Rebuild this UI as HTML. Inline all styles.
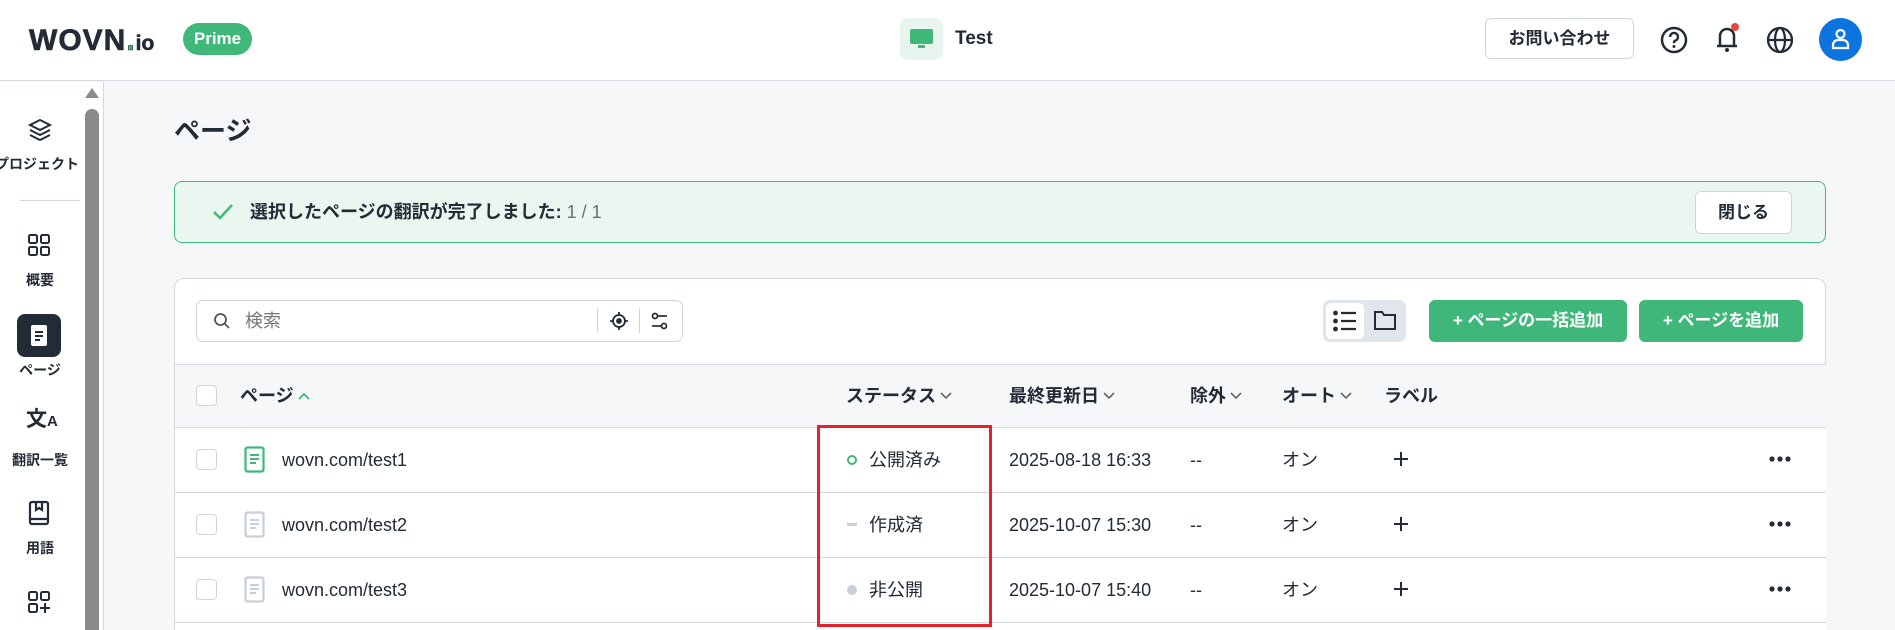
<!DOCTYPE html><html style="width:1895px;height:630px;overflow:hidden"><head><meta charset="utf-8"><style>
*{box-sizing:border-box;margin:0;padding:0}
body{width:1895px;height:630px;overflow:hidden;background:#f6f7f9;font-family:"Liberation Sans","Noto Sans CJK JP",sans-serif;color:#222b36;position:relative}
.a{position:absolute;line-height:22px}
.hdr{left:0;top:0;width:1895px;height:81px;background:#fff;border-bottom:1px solid #d5d9df}
.side{left:0;top:82px;width:104px;height:548px;background:#fff;border-right:1px solid #d5d9df}
.lbl{font-size:14px;font-weight:bold;text-align:center;width:80px;left:0}
.btnw{background:#fff;border:1px solid #cfd5dd;border-radius:6px;font-weight:bold;display:flex;align-items:center;justify-content:center}
.row{left:175px;width:1651px;border-top:1px solid #d5d9df;background:#fff}
.cb{width:21px;height:21px;border:1.5px solid #cfd5dd;border-radius:4px;background:#fff}
.t{font-size:18px}
.th{font-size:18px;font-weight:bold;display:flex;align-items:center}
.th svg{margin-left:3px}
</style></head><body>
<div class="a hdr"></div>
<div class="a" style="left:29px;top:25px;font-size:30px;line-height:32px;font-weight:900;letter-spacing:1px;color:#222b36;-webkit-text-stroke:0.6px #222b36">WOVN<span style="color:#3fb87a">.</span><span style="font-size:21px;letter-spacing:0">io</span></div>
<div class="a" style="left:183px;top:23px;width:69px;height:32px;border-radius:16px;background:#3fb87a;color:#fff;font-weight:bold;font-size:17px;text-align:center;line-height:32px">Prime</div>
<div class="a" style="left:900px;top:18px;width:43px;height:42px;border-radius:8px;background:#e8f5ee"></div>
<svg class="a" style="left:909px;top:27px" width="25" height="24" viewBox="0 0 25 24"><rect x="1" y="2" width="23" height="15" rx="2" fill="#3fb87a"/><rect x="9" y="18" width="7" height="3" fill="#3fb87a"/></svg>
<div class="a" style="left:955px;top:28px;font-size:19px;font-weight:bold">Test</div>
<div class="a btnw" style="left:1485px;top:18px;width:149px;height:41px;font-size:17px">お問い合わせ</div>
<svg class="a" style="left:1659px;top:25px" width="30" height="30" viewBox="0 0 30 30"><circle cx="15" cy="15" r="12" fill="none" stroke="#222b36" stroke-width="2.5"/><path d="M11 12a4 4 0 1 1 5 3.8c-1 .4-1 1-1 2.5" fill="none" stroke="#222b36" stroke-width="2.4"/><circle cx="15" cy="21.5" r="1.5" fill="#222b36"/></svg>
<svg class="a" style="left:1712px;top:22px" width="32" height="32" viewBox="0 0 32 32"><path d="M8 24V14a7 7 0 0 1 14 0v10M5 24h20" fill="none" stroke="#222b36" stroke-width="2.5"/><circle cx="15" cy="28" r="2" fill="#222b36"/><circle cx="23" cy="5" r="4" fill="#e5473d"/></svg>
<svg class="a" style="left:1765px;top:25px" width="30" height="30" viewBox="0 0 30 30"><g fill="none" stroke="#222b36" stroke-width="2.3"><circle cx="15" cy="15" r="12"/><ellipse cx="15" cy="15" rx="5" ry="12"/><path d="M3 15h24"/></g></svg>
<div class="a" style="left:1819px;top:18px;width:43px;height:43px;border-radius:50%;background:#0b74de"></div>
<svg class="a" style="left:1829px;top:27px" width="23" height="25" viewBox="0 0 23 25"><g fill="none" stroke="#fff" stroke-width="2.2"><circle cx="11.5" cy="7" r="4"/><path d="M4 21v-3a5 5 0 0 1 5-5h5a5 5 0 0 1 5 5v3z"/></g></svg>

<div class="a side"></div>
<div class="a" style="left:85px;top:88px;width:0;height:0;border-left:7px solid transparent;border-right:7px solid transparent;border-bottom:10px solid #8a8a8a"></div>
<div class="a" style="left:85px;top:109px;width:14px;height:521px;border-radius:7px 7px 0 0;background:#8a8a8a"></div>
<svg class="a" style="left:27px;top:117px" width="26" height="26" viewBox="0 0 26 26"><g fill="none" stroke="#222b36" stroke-width="2"><path d="M13 3l10 5-10 5-10-5z"/><path d="M3 13l10 5 10-5M3 18l10 5 10-5"/></g></svg>
<div class="a lbl" style="top:153px;width:86px;left:-6px">プロジェクト</div>
<div class="a" style="left:20px;top:200px;width:60px;height:1px;background:#d5d9df"></div>
<svg class="a" style="left:27px;top:233px" width="24" height="24" viewBox="0 0 24 24"><g fill="none" stroke="#222b36" stroke-width="2"><rect x="2" y="2" width="8" height="8" rx="1.5"/><rect x="14" y="2" width="8" height="8" rx="1.5"/><rect x="2" y="14" width="8" height="8" rx="1.5"/><rect x="14" y="14" width="8" height="8" rx="1.5"/></g></svg>
<div class="a lbl" style="top:269px">概要</div>
<div class="a" style="left:17px;top:314px;width:44px;height:43px;border-radius:8px;background:#222b36"></div>
<svg class="a" style="left:30px;top:324px" width="18" height="23" viewBox="0 0 18 23"><rect x="1" y="1" width="16" height="21" rx="2" fill="#fff"/><path d="M5 8h8M5 12h8M5 16h5" stroke="#222b36" stroke-width="2"/></svg>
<div class="a lbl" style="top:359px">ページ</div>
<div class="a" style="left:26px;top:409px;font-size:21px;font-weight:bold">文<span style="font-size:15px">A</span></div>
<div class="a lbl" style="top:449px">翻訳一覧</div>
<svg class="a" style="left:28px;top:500px" width="22" height="26" viewBox="0 0 22 26"><g fill="none" stroke="#222b36" stroke-width="2.2"><rect x="2" y="2" width="18" height="22" rx="2"/><path d="M2 19h18M8 2v8l3-2 3 2V2"/></g></svg>
<div class="a lbl" style="top:537px">用語</div>
<svg class="a" style="left:27px;top:590px" width="24" height="30" viewBox="0 0 24 30"><g fill="none" stroke="#222b36" stroke-width="2"><rect x="2" y="2" width="8" height="8" rx="1.5"/><rect x="14" y="2" width="8" height="8" rx="1.5"/><rect x="2" y="14" width="8" height="8" rx="1.5"/><path d="M18 13v10M13 18h10"/></g></svg>

<div class="a" style="left:174px;top:116px;font-size:26px;line-height:30px;font-weight:bold">ページ</div>
<div class="a" style="left:174px;top:181px;width:1652px;height:62px;border:1.5px solid #3fb87a;border-radius:8px;background:#eaf7f0"></div>
<svg class="a" style="left:212px;top:203px" width="22" height="18" viewBox="0 0 22 18"><path d="M2 9l6 6L20 2" fill="none" stroke="#3fb87a" stroke-width="2.5"/></svg>
<div class="a" style="left:250px;top:201px;font-size:18px;font-weight:bold">選択したページの翻訳が完了しました: <span style="font-weight:normal;color:#666e78">1 / 1</span></div>
<div class="a btnw" style="left:1695px;top:191px;width:97px;height:43px;font-size:17px">閉じる</div>

<div class="a" style="left:174px;top:278px;width:1652px;height:352px;background:#fff;border:1px solid #d5d9df;border-bottom:none;border-radius:10px 10px 0 0"></div>
<div class="a" style="left:196px;top:300px;width:487px;height:42px;border:1px solid #cfd5dd;border-radius:7px;background:#fff"></div>
<svg class="a" style="left:213px;top:312px" width="18" height="18" viewBox="0 0 18 18"><g fill="none" stroke="#555" stroke-width="1.8"><circle cx="7.5" cy="7.5" r="5.5"/><path d="M11.5 11.5L16 16"/></g></svg>
<div class="a" style="left:245px;top:310px;font-size:18px;color:#777">検索</div>
<div class="a" style="left:597px;top:308px;width:1px;height:25px;background:#cfd5dd"></div>
<svg class="a" style="left:609px;top:311px" width="20" height="20" viewBox="0 0 20 20"><g fill="none" stroke="#222b36" stroke-width="1.8"><circle cx="10" cy="10" r="6"/><circle cx="10" cy="10" r="2" fill="#222b36"/><path d="M10 1v3M10 16v3M1 10h3M16 10h3"/></g></svg>
<div class="a" style="left:639px;top:308px;width:1px;height:25px;background:#cfd5dd"></div>
<svg class="a" style="left:651px;top:311px" width="18" height="20" viewBox="0 0 18 20"><g fill="none" stroke="#222b36" stroke-width="1.7"><circle cx="4" cy="5" r="2.5"/><path d="M7 5h9"/><circle cx="13" cy="15" r="2.5"/><path d="M1 15h9"/></g></svg>

<div class="a" style="left:1323px;top:300px;width:83px;height:42px;border-radius:7px;background:#e1e6ed"></div>
<div class="a" style="left:1326px;top:303px;width:38px;height:36px;border-radius:5px;background:#fff"></div>
<svg class="a" style="left:1333px;top:310px" width="24" height="22" viewBox="0 0 24 22"><g stroke="#222b36" stroke-width="2.2"><path d="M8 3h15M8 11h15M8 19h15"/><circle cx="2.5" cy="3" r="1.3" fill="#222b36"/><circle cx="2.5" cy="11" r="1.3" fill="#222b36"/><circle cx="2.5" cy="19" r="1.3" fill="#222b36"/></g></svg>
<svg class="a" style="left:1373px;top:309px" width="24" height="22" viewBox="0 0 24 22"><path d="M2 3h7l2 3h11v14H2z" fill="none" stroke="#222b36" stroke-width="2"/></svg>
<div class="a" style="left:1429px;top:300px;width:198px;height:42px;border-radius:6px;background:#40b77a;color:#fff;font-weight:bold;font-size:17px;text-align:center;line-height:42px">+ ページの一括追加</div>
<div class="a" style="left:1639px;top:300px;width:164px;height:42px;border-radius:6px;background:#40b77a;color:#fff;font-weight:bold;font-size:17px;text-align:center;line-height:42px">+ ページを追加</div>

<div class="a row" style="top:364px;height:63px;background:#f6f7f9"></div>
<div class="a cb" style="left:196px;top:385px"></div>
<div class="a th" style="left:240px;top:385px">ページ<svg width="14" height="10" viewBox="0 0 14 10"><path d="M2 8l5-5 5 5" fill="none" stroke="#3fb87a" stroke-width="1.8"/></svg></div>
<div class="a th" style="left:846px;top:385px">ステータス<svg width="14" height="10" viewBox="0 0 14 10"><path d="M2 2l5 5 5-5" fill="none" stroke="#666" stroke-width="1.6"/></svg></div>
<div class="a th" style="left:1009px;top:385px">最終更新日<svg width="14" height="10" viewBox="0 0 14 10"><path d="M2 2l5 5 5-5" fill="none" stroke="#666" stroke-width="1.6"/></svg></div>
<div class="a th" style="left:1190px;top:385px">除外<svg width="14" height="10" viewBox="0 0 14 10"><path d="M2 2l5 5 5-5" fill="none" stroke="#666" stroke-width="1.6"/></svg></div>
<div class="a th" style="left:1282px;top:385px">オート<svg width="14" height="10" viewBox="0 0 14 10"><path d="M2 2l5 5 5-5" fill="none" stroke="#666" stroke-width="1.6"/></svg></div>
<div class="a th" style="left:1384px;top:385px">ラベル</div>

<div class="a row" style="top:427px;height:65px"></div>
<div class="a row" style="top:492px;height:65px"></div>
<div class="a row" style="top:557px;height:65px"></div>
<div class="a row" style="top:622px;height:8px"></div>

<div class="a cb" style="left:196px;top:449px"></div>
<svg class="a" style="left:244px;top:446px" width="21" height="27" viewBox="0 0 21 27"><rect x="1.5" y="1.5" width="18" height="24" rx="2" fill="none" stroke="#3fb87a" stroke-width="2.2"/><path d="M6 9h9M6 13h9M6 17h6" stroke="#3fb87a" stroke-width="2"/></svg>
<div class="a t" style="left:282px;top:449px">wovn.com/test1</div>
<div class="a" style="left:847px;top:455px;width:10px;height:10px;border-radius:50%;border:2px solid #3fb87a"></div>
<div class="a t" style="left:869px;top:449px">公開済み</div>
<div class="a t" style="left:1009px;top:449px">2025-08-18 16:33</div>
<div class="a t" style="left:1190px;top:449px">--</div>
<div class="a t" style="left:1282px;top:449px">オン</div>
<svg class="a" style="left:1393px;top:451px" width="16" height="16" viewBox="0 0 16 16"><path d="M8 1v14M1 8h14" stroke="#222b36" stroke-width="2"/></svg>
<svg class="a" style="left:1769px;top:456px" width="22" height="6" viewBox="0 0 22 6"><circle cx="3" cy="3" r="2.6" fill="#222b36"/><circle cx="11" cy="3" r="2.6" fill="#222b36"/><circle cx="19" cy="3" r="2.6" fill="#222b36"/></svg>

<div class="a cb" style="left:196px;top:514px"></div>
<svg class="a" style="left:244px;top:511px" width="21" height="27" viewBox="0 0 21 27"><rect x="1.5" y="1.5" width="18" height="24" rx="2" fill="none" stroke="#c8cfd8" stroke-width="2.2"/><path d="M6 9h9M6 13h9M6 17h6" stroke="#c8cfd8" stroke-width="2"/></svg>
<div class="a t" style="left:282px;top:514px">wovn.com/test2</div>
<div class="a" style="left:847px;top:523px;width:10px;height:3px;background:#c8cfd8"></div>
<div class="a t" style="left:869px;top:514px">作成済</div>
<div class="a t" style="left:1009px;top:514px">2025-10-07 15:30</div>
<div class="a t" style="left:1190px;top:514px">--</div>
<div class="a t" style="left:1282px;top:514px">オン</div>
<svg class="a" style="left:1393px;top:516px" width="16" height="16" viewBox="0 0 16 16"><path d="M8 1v14M1 8h14" stroke="#222b36" stroke-width="2"/></svg>
<svg class="a" style="left:1769px;top:521px" width="22" height="6" viewBox="0 0 22 6"><circle cx="3" cy="3" r="2.6" fill="#222b36"/><circle cx="11" cy="3" r="2.6" fill="#222b36"/><circle cx="19" cy="3" r="2.6" fill="#222b36"/></svg>

<div class="a cb" style="left:196px;top:579px"></div>
<svg class="a" style="left:244px;top:576px" width="21" height="27" viewBox="0 0 21 27"><rect x="1.5" y="1.5" width="18" height="24" rx="2" fill="none" stroke="#c8cfd8" stroke-width="2.2"/><path d="M6 9h9M6 13h9M6 17h6" stroke="#c8cfd8" stroke-width="2"/></svg>
<div class="a t" style="left:282px;top:579px">wovn.com/test3</div>
<div class="a" style="left:847px;top:585px;width:10px;height:10px;border-radius:50%;background:#c8cfd8"></div>
<div class="a t" style="left:869px;top:579px">非公開</div>
<div class="a t" style="left:1009px;top:579px">2025-10-07 15:40</div>
<div class="a t" style="left:1190px;top:579px">--</div>
<div class="a t" style="left:1282px;top:579px">オン</div>
<svg class="a" style="left:1393px;top:581px" width="16" height="16" viewBox="0 0 16 16"><path d="M8 1v14M1 8h14" stroke="#222b36" stroke-width="2"/></svg>
<svg class="a" style="left:1769px;top:586px" width="22" height="6" viewBox="0 0 22 6"><circle cx="3" cy="3" r="2.6" fill="#222b36"/><circle cx="11" cy="3" r="2.6" fill="#222b36"/><circle cx="19" cy="3" r="2.6" fill="#222b36"/></svg>

<div class="a" style="left:817px;top:425px;width:175px;height:202px;border:3.5px solid #e3222b"></div>
</body></html>
